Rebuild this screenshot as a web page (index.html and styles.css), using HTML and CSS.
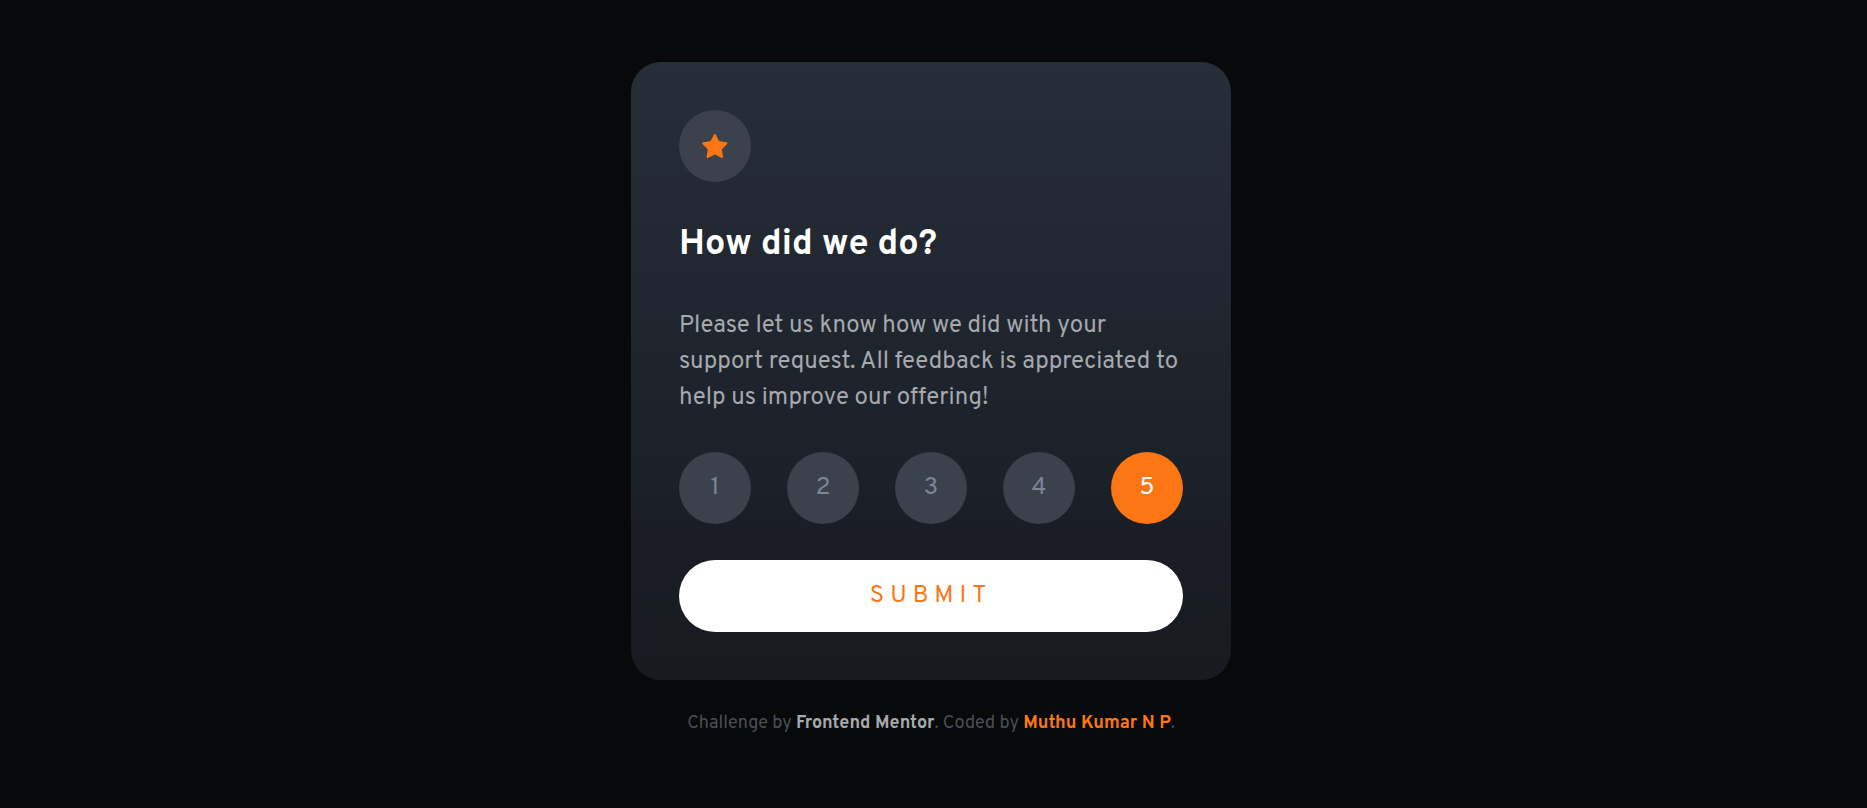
FILE: index.html
```html
<!DOCTYPE html>
<html lang="en">
<head>
<meta charset="utf-8">
<meta name="viewport" content="width=device-width, initial-scale=1">
<title>Interactive rating component</title>
<link rel="stylesheet" href="styles.css">
</head>
<body>
<main class="page">
  <form class="card">
    <div class="badge">
      <svg class="star" viewBox="0 0 17 16" aria-hidden="true"><path d="m9.067.43 1.99 4.031c.112.228.33.386.58.422l4.45.647a.772.772 0 0 1 .427 1.316l-3.22 3.138a.773.773 0 0 0-.222.683l.76 4.431a.772.772 0 0 1-1.12.813l-3.98-2.092a.773.773 0 0 0-.718 0l-3.98 2.092a.772.772 0 0 1-1.119-.813l.76-4.431a.77.77 0 0 0-.222-.683L.233 6.846A.772.772 0 0 1 .661 5.53l4.449-.647a.772.772 0 0 0 .58-.422L7.68.43a.774.774 0 0 1 1.387 0Z"/></svg>
    </div>
    <h1 class="title">How did we do?</h1>
    <p class="text">Please let us know how we did with your support request. All feedback is appreciated to help us improve our offering!</p>
    <div class="ratings">
      <button class="rating" type="button">1</button>
      <button class="rating" type="button">2</button>
      <button class="rating" type="button">3</button>
      <button class="rating" type="button">4</button>
      <button class="rating rating-active" type="button" aria-pressed="true">5</button>
    </div>
    <button class="submit" type="submit">SUBMIT</button>
  </form>
  <footer class="credit">Challenge by <a class="link" href="#">Frontend Mentor</a>. Coded by <a class="link link-author" href="#">Muthu Kumar N P</a>.</footer>
</main>
</body>
</html>
```
FILE: styles.css
```css
* {
  box-sizing: border-box;
}

body {
  margin: 0;
  background: #07090a;
  font-family: Overpass, Roboto, "Liberation Sans", sans-serif;
}

.page {
  min-height: 100vh;
  padding: 48px 5px 58px 0;
  display: flex;
  flex-direction: column;
  align-items: center;
  justify-content: center;
  gap: 32px;
}

.card {
  width: 100%;
  max-width: 600px;
  padding: 48px;
  border-radius: 30px;
  background: linear-gradient(#262e37, #212730 38%, #1d242b 50%, #1b2128 68%, #1a1d25 76%, #171b21);
}

.badge {
  width: 72px;
  height: 72px;
  border-radius: 50%;
  background: #3c424b;
  display: flex;
  align-items: center;
  justify-content: center;
}

.star {
  width: 26px;
  height: 24px;
  fill: #fc7614;
}

.title {
  margin: 36px 0;
  color: #fff;
  font-size: 36px;
  line-height: 54px;
  font-weight: 700;
}

.text {
  margin: 0 0 36px;
  color: #a6a9ae;
  font-size: 24px;
  line-height: 36px;
}

.ratings {
  display: flex;
  justify-content: space-between;
  margin-bottom: 36px;
}

.rating {
  width: 72px;
  height: 72px;
  padding: 0;
  border: 0;
  border-radius: 50%;
  background: #3c424b;
  color: #7c8798;
  font: inherit;
  font-size: 24px;
  cursor: pointer;
}

.rating-active {
  background: #fc7614;
  color: #fff;
}

.submit {
  display: block;
  width: 100%;
  height: 72px;
  padding: 0;
  border: 0;
  border-radius: 36px;
  background: #fff;
  color: #fc7614;
  font: inherit;
  font-size: 24px;
  letter-spacing: 6px;
  cursor: pointer;
}

.credit {
  color: #4a4f57;
  font-size: 18px;
  line-height: 24px;
}

.link {
  color: #a6a9ae;
  font-weight: 700;
  text-decoration: none;
}

.link-author {
  color: #fc7614;
}
```
